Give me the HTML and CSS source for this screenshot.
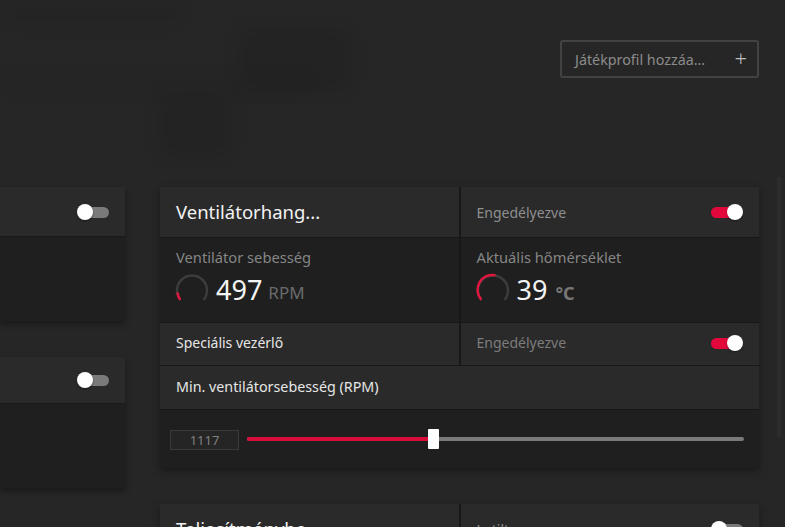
FILE: index.html
```html
<!DOCTYPE html>
<html lang="hu">
<head>
<meta charset="utf-8">
<link rel="stylesheet" href="styles.css">
</head>
<body>
<div class="page">
  <div class="backdrop">
    <div class="blob b1"></div>
    <div class="blob b2"></div>
    <div class="blob b3"></div>
    <div class="blob b4"></div>
  </div>
  <div class="top">
    <button class="add-btn"><span class="add-label">Játékprofil hozzáa...</span><span class="plus">+</span></button>
  </div>
  <div class="content">
    <div class="side">
      <div class="side-card">
        <div class="side-head"><span class="toggle off"><span class="knob"></span></span></div>
        <div class="side-body"></div>
      </div>
      <div class="side-card second">
        <div class="side-head"><span class="toggle off"><span class="knob"></span></span></div>
        <div class="side-body"></div>
      </div>
    </div>
    <div class="main">
      <div class="card">
        <div class="row head-row">
          <div class="cell title-cell">Ventilátorhang...</div>
          <div class="cell sw-cell"><span class="muted">Engedélyezve</span><span class="toggle on"><span class="knob"></span></span></div>
        </div>
        <div class="row stat-row">
          <div class="cell stat">
            <div class="stat-label">Ventilátor sebesség</div>
            <div class="stat-val">
              <svg class="gauge" viewBox="0 0 36 36" width="36" height="36">
                <path d="M6.33 27.9 A15 15 0 1 1 29.67 27.9" fill="none" stroke="#3c3c3c" stroke-width="2.5"/>
                <path d="M6.33 27.9 A15 15 0 0 1 3.4 20.5" fill="none" stroke="#e0163f" stroke-width="2.5"/>
              </svg>
              <span class="num">497</span><span class="unit">RPM</span>
            </div>
          </div>
          <div class="cell stat">
            <div class="stat-label">Aktuális hőmérséklet</div>
            <div class="stat-val">
              <svg class="gauge" viewBox="0 0 36 36" width="36" height="36">
                <path d="M6.33 27.9 A15 15 0 1 1 29.67 27.9" fill="none" stroke="#3c3c3c" stroke-width="2.5"/>
                <path d="M6.33 27.9 A15 15 0 0 1 20.5 3.2" fill="none" stroke="#e0163f" stroke-width="2.5"/>
              </svg>
              <span class="num">39</span><span class="unit deg">°C</span>
            </div>
          </div>
        </div>
        <div class="row mid-row">
          <div class="cell plain">Speciális vezérlő</div>
          <div class="cell sw-cell"><span class="muted dim">Engedélyezve</span><span class="toggle on"><span class="knob"></span></span></div>
        </div>
        <div class="row full-row">
          <div class="cell plain wide">Min. ventilátorsebesség (RPM)</div>
        </div>
        <div class="row slider-row">
          <div class="slider-box">1117</div>
          <div class="track">
            <div class="fill" style="width:37.5%"></div>
            <div class="thumb" style="left:37.5%"></div>
          </div>
        </div>
      </div>
      <div class="card next">
        <div class="row head-row">
          <div class="cell title-cell">Teljesítménybe...</div>
          <div class="cell sw-cell"><span class="muted">Letiltva</span><span class="toggle off"><span class="knob"></span></span></div>
        </div>
      </div>
    </div>
    <div class="scroll"></div>
  </div>
</div>
</body>
</html>
```
FILE: styles.css
```css
* { box-sizing: border-box; }
html, body { margin: 0; padding: 0; }
body {
  background: #262626;
  font-family: "Noto Sans", "Open Sans", sans-serif;
  width: 785px;
  height: 527px;
  overflow: hidden;
}
.page { position: relative; width: 785px; height: 527px; overflow: hidden; }
.backdrop { position: absolute; left: 0; top: 0; width: 785px; height: 190px; }
.blob { position: absolute; background: #1e1e1e; filter: blur(8px); opacity: .35; }
.b1 { left: 10px; top: 8px; width: 170px; height: 12px; }
.b2 { left: 160px; top: 95px; width: 70px; height: 60px; }
.b3 { left: 240px; top: 30px; width: 110px; height: 60px; }
.b4 { left: 0; top: 78px; width: 310px; height: 8px; }

.top {
  position: relative;
  height: 187px;
  display: flex;
  justify-content: flex-end;
  align-items: flex-start;
  padding: 40px 26px 0 0;
}
.add-btn {
  width: 199px;
  height: 38px;
  background: #262626;
  border: 2px solid #424242;
  border-radius: 3px;
  display: flex;
  align-items: center;
  justify-content: space-between;
  padding: 0 10px 0 13px;
  font-family: inherit;
  color: #8c8c8c;
  font-size: 14.3px;
}
.plus { color: #bdbdbd; font-size: 22px; font-weight: 300; line-height: 1; margin-top: -2px; }

.content { position: relative; display: flex; gap: 35px; align-items: flex-start; }
.side { width: 125px; display: flex; flex-direction: column; gap: 36px; }
.side-card { box-shadow: 0 3px 6px rgba(0,0,0,.35); }
.side-head {
  height: 50px;
  background: #2a2a2a;
  border-bottom: 1px solid #1a1a1a;
  display: flex;
  align-items: center;
  justify-content: flex-end;
  padding-right: 16px;
}
.side-card.second .side-head { height: 47px; }
.side-body { height: 84px; background: #1f1f1f; }

.main { width: 599px; display: flex; flex-direction: column; gap: 36px; }
.card { background: #181818; box-shadow: 0 3px 8px rgba(0,0,0,.35); }
.row { display: flex; gap: 2px; }
.row + .row { margin-top: 1px; }
.cell { flex: 1; display: flex; align-items: center; padding: 0 16px; background: #2a2a2a; }
.head-row { height: 50px; }
.title-cell { color: #f2f2f2; font-size: 18.5px; padding-bottom: 1px; }
.sw-cell { justify-content: space-between; padding-right: 16px; }
.muted { color: #8f8f8f; font-size: 14px; }
.muted.dim { color: #7c7c7c; }

.stat-row { height: 84px; }
.stat { background: #1f1f1f; flex-direction: column; align-items: flex-start; justify-content: flex-start; padding-top: 10px; }
.stat-label { color: #868686; font-size: 14.7px; line-height: 19px; }
.stat-val { display: flex; align-items: center; margin-top: 5px; margin-left: -2px; }
.gauge { display: block; margin-right: 6px; }
.num { color: #f4f4f4; font-size: 27px; line-height: 30px; }
.unit { color: #6a6a6a; font-size: 17px; margin-left: 6px; margin-top: 5px; }
.unit.deg { font-weight: 700; color: #777; font-size: 18px; margin-left: 8px; }

.mid-row { height: 42px; }
.mid-row .cell { padding-bottom: 3px; }
.plain { color: #e6e6e6; font-size: 14px; }
.plain.wide { font-size: 14.3px; padding-bottom: 2px; }
.full-row { height: 43px; }
.slider-row {
  height: 58px;
  background: #1f1f1f;
  display: flex;
  align-items: center;
  padding: 0 15px 0 10px;
  gap: 8px;
}
.slider-box {
  width: 69px;
  height: 20px;
  border: 1px solid #3a3a3a;
  background: #252525;
  color: #808080;
  font-size: 13px;
  display: flex;
  align-items: center;
  justify-content: center;
  margin-top: 2px;
}
.track { position: relative; flex: 1; height: 4px; background: #7a7a7a; border-radius: 2px; }
.fill { position: absolute; left: 0; top: 0; height: 4px; background: #d80d3c; border-radius: 2px; }
.thumb {
  position: absolute;
  top: -8px;
  width: 11px;
  height: 20px;
  margin-left: -5px;
  background: #fff;
  border-radius: 1px;
}

.card.next .head-row { height: 50px; }

.toggle { position: relative; width: 32px; height: 14px; display: inline-block; }
.toggle::before {
  content: "";
  position: absolute;
  left: 3px; right: 0; top: 2px;
  height: 11px;
  border-radius: 6px;
  background: #7a7a7a;
}
.toggle.on::before { background: #e2083c; left: 0; right: 4px; }
.knob {
  position: absolute;
  top: -1px;
  left: 0;
  width: 16px;
  height: 16px;
  border-radius: 50%;
  background: #fff;
  box-shadow: 0 1px 2px rgba(0,0,0,.4);
}
.toggle.on .knob { left: auto; right: 0; }

.scroll { position: absolute; left: 777px; top: -10px; width: 4px; height: 260px; background: #2d2d2d; }
```
